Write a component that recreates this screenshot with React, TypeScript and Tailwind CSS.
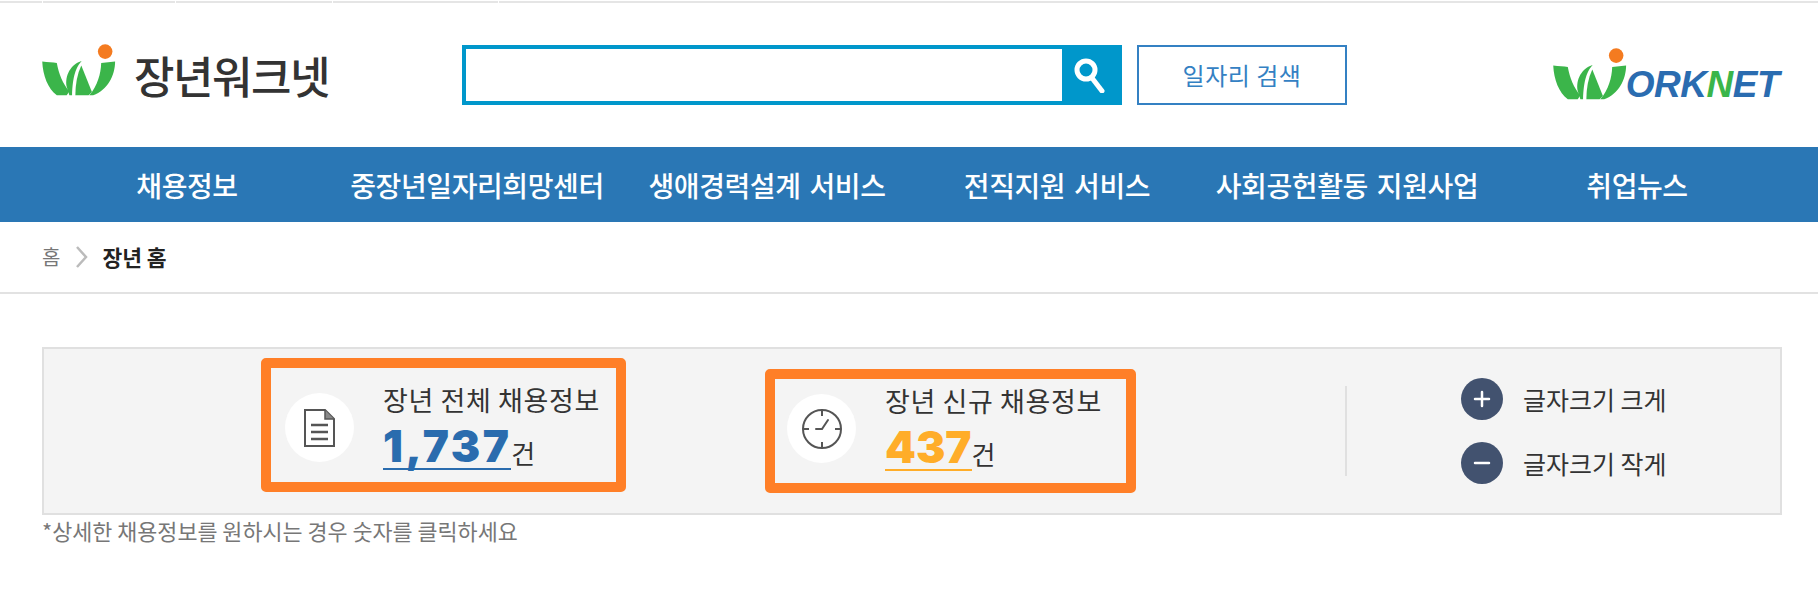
import { Minus, Plus } from "lucide-react";

const KR = "font-['Noto_Sans_CJK_KR','Noto_Sans',sans-serif]";

const navItems = [
  "채용정보",
  "중장년일자리희망센터",
  "생애경력설계 서비스",
  "전직지원 서비스",
  "사회공헌활동 지원사업",
  "취업뉴스",
];

const topSegments = ["w-[42px]", "w-[132px]", "w-[156px]", "w-[165px]", "flex-1"];

const LogoMark = ({ className }: { className: string }) => (
  <svg viewBox="18 15 222 157" className={className}>
    <circle cx="208" cy="38" r="22" fill="#f47b20" />
    <path d="M18 68C35 70 50 70 62 72C68 105 80 135 100 158L92 170L62 170C35 150 20 110 18 68Z" fill="#3bb54a" />
    <path d="M92 145C85 110 105 75 137 66C120 85 110 110 108 170L100 170Z" fill="#3bb54a" />
    <path d="M118 170C118 135 124 105 136 80L168 160L158 170Z" fill="#3bb54a" />
    <path d="M238 68C238 110 215 155 172 170L160 170C185 140 195 105 196 72Z" fill="#3bb54a" />
  </svg>
);

const WorknetLogo = () => (
  <div className="flex items-end h-[52px] mt-[-3px] mr-[3px]">
    <LogoMark className="w-[74px] h-[52px]" />
    <span className="ml-[-1px] mb-[-4px] text-[37px] leading-[38px] font-['Liberation_Sans',sans-serif] font-bold italic text-[#2a6cb0] tracking-[-0.5px]">
      ORK<span className="text-[#3bb54a]">N</span>ET
    </span>
  </div>
);

const DocIcon = () => (
  <svg viewBox="0 0 31 38" className="w-[31px] h-[38px]" fill="none" stroke="#555" strokeWidth="2">
    <path d="M1 1h20l9 9v27H1z" />
    <path d="M21 1v9h9" fill="#888" strokeWidth="1.5" />
    <path d="M7 16h17M7 23h17M7 30h17" strokeWidth="2.5" />
  </svg>
);

const ClockIcon = () => (
  <svg viewBox="0 0 42 42" className="w-[42px] h-[42px]" fill="none" stroke="#555" strokeWidth="2">
    <circle cx="21" cy="21" r="19" />
    <path d="M21 2v6M21 34v6M2 21h6M34 21h6" />
    <path d="M15 21h6l6-9" strokeLinecap="round" />
  </svg>
);

const StatBox = ({
  size,
  title,
  count,
  countStyle,
  icon,
}: {
  size: string;
  title: string;
  count: string;
  countStyle: string;
  icon: React.ReactNode;
}) => (
  <div className={`${size} flex items-start border-[10px] border-[#ff7f27] rounded-[5px]`}>
    <div className="w-[69px] h-[69px] mt-[10px] rounded-full bg-white flex items-center justify-center shrink-0">{icon}</div>
    <div className="ml-[29px]">
      <div className="text-[27px] leading-[34px] tracking-[0.6px] text-[#333] whitespace-nowrap">{title}</div>
      <div className="flex items-end">
        <span className={`${countStyle} border-b-2 pt-[8px] text-[44px] leading-[43px] font-black font-['Inter',sans-serif]`}>
          {count}
        </span>
        <span className="text-[26px] leading-[34px] text-[#333]">건</span>
      </div>
    </div>
  </div>
);

export default function App() {
  return (
    <div className={`${KR} bg-white min-h-[591px]`}>
      {/* 상단 줄 */}
      <div className="flex gap-[1px] pt-[1px] h-[3px]">
        {topSegments.map((w, i) => (
          <div key={i} className={`${w} h-[2px] bg-[#e5e5e5]`} />
        ))}
      </div>

      {/* Header */}
      <div className="h-[144px] flex items-center pr-[36px] pl-[42px]">
        <div className="w-[420px] flex items-center">
          <LogoMark className="w-[74px] h-[52px] mt-[-11px]" />
          <span className="ml-[18px] text-[44px] leading-none font-medium tracking-[-1.5px] text-[#333]">장년워크넷</span>
        </div>
        <div className="w-[660px] h-[60px] flex border-4 border-[#0097cb] bg-white">
          <div className="flex-1" />
          <div className="w-[56px] bg-[#0097cb] flex items-center justify-center">
            <svg viewBox="0 0 34 36" className="w-[34px] h-[36px]" fill="none" stroke="white">
              <circle cx="13" cy="13" r="9" strokeWidth="5" />
              <path d="M19 21l10 13" strokeWidth="5" strokeLinecap="round" />
            </svg>
          </div>
        </div>
        <div className="ml-[15px] w-[210px] h-[60px] border-2 border-[#3481c3] flex items-center justify-center text-[24px] tracking-[0.5px] text-[#3481c3]">
          일자리 검색
        </div>
        <div className="ml-auto">
          <WorknetLogo />
        </div>
      </div>

      {/* Nav */}
      <div className="h-[75px] bg-[#2a77b5] pl-[42px] pr-[36px] grid grid-cols-6 items-center">
        {navItems.map((item) => (
          <div key={item} className="text-center text-[28px] font-medium text-white whitespace-nowrap tracking-[-0.4px] [word-spacing:3px]">
            {item}
          </div>
        ))}
      </div>

      {/* Breadcrumb */}
      <div className="h-[72px] border-b-2 border-[#e2e2e2] flex items-center pl-[42px]">
        <span className="text-[20px] text-[#777]">홈</span>
        <svg viewBox="0 0 12 22" className="w-[12px] h-[22px] ml-[16px]" fill="none" stroke="#bbb" strokeWidth="2.5">
          <path d="M1 1l9 10-9 10" />
        </svg>
        <span className="ml-[14px] text-[21.5px] font-bold text-[#222]">장년 홈</span>
      </div>

      {/* 채용정보 */}
      <div className="ml-[42px] mr-[36px] mt-[53px] h-[168px] border-2 border-[#e0e0e0] bg-[#f4f4f4] flex items-end pb-[21px] pl-[217px]">
        <StatBox
          size="w-[365px] h-[134px] pt-[15px] pl-[14px]"
          title="장년 전체 채용정보"
          count="1,737"
          countStyle="text-[#2a6cae] border-[#2a6cae] tracking-[2.5px]"
          icon={<DocIcon />}
        />
        <div className="ml-[139px] mb-[-1px]">
          <StatBox
            size="w-[371px] h-[124px] pt-[5px] pl-[12px]"
            title="장년 신규 채용정보"
            count="437"
            countStyle="text-[#ffad29] border-[#ffad29]"
            icon={<ClockIcon />}
          />
        </div>
        <div className="ml-[209px] mb-[16px] w-[2px] h-[90px] bg-[#e0e0e0]" />
        <div className="ml-[114px] mb-[8px] flex flex-col gap-[22px]">
          <div className="flex items-center">
            <div className="w-[42px] h-[42px] rounded-full bg-[#42526f] flex items-center justify-center">
              <Plus className="w-[24px] h-[24px] text-white" strokeWidth={2.5} />
            </div>
            <span className="ml-[20px] text-[25px] leading-[34px] text-[#333] whitespace-nowrap">글자크기 크게</span>
          </div>
          <div className="flex items-center">
            <div className="w-[42px] h-[42px] rounded-full bg-[#42526f] flex items-center justify-center">
              <Minus className="w-[24px] h-[24px] text-white" strokeWidth={2.5} />
            </div>
            <span className="ml-[20px] text-[25px] leading-[34px] text-[#333] whitespace-nowrap">글자크기 작게</span>
          </div>
        </div>
      </div>

      <div className="ml-[42px] mt-[2px] text-[21.8px] leading-[28px] text-[#777]">*상세한 채용정보를 원하시는 경우 숫자를 클릭하세요</div>
    </div>
  );
}
